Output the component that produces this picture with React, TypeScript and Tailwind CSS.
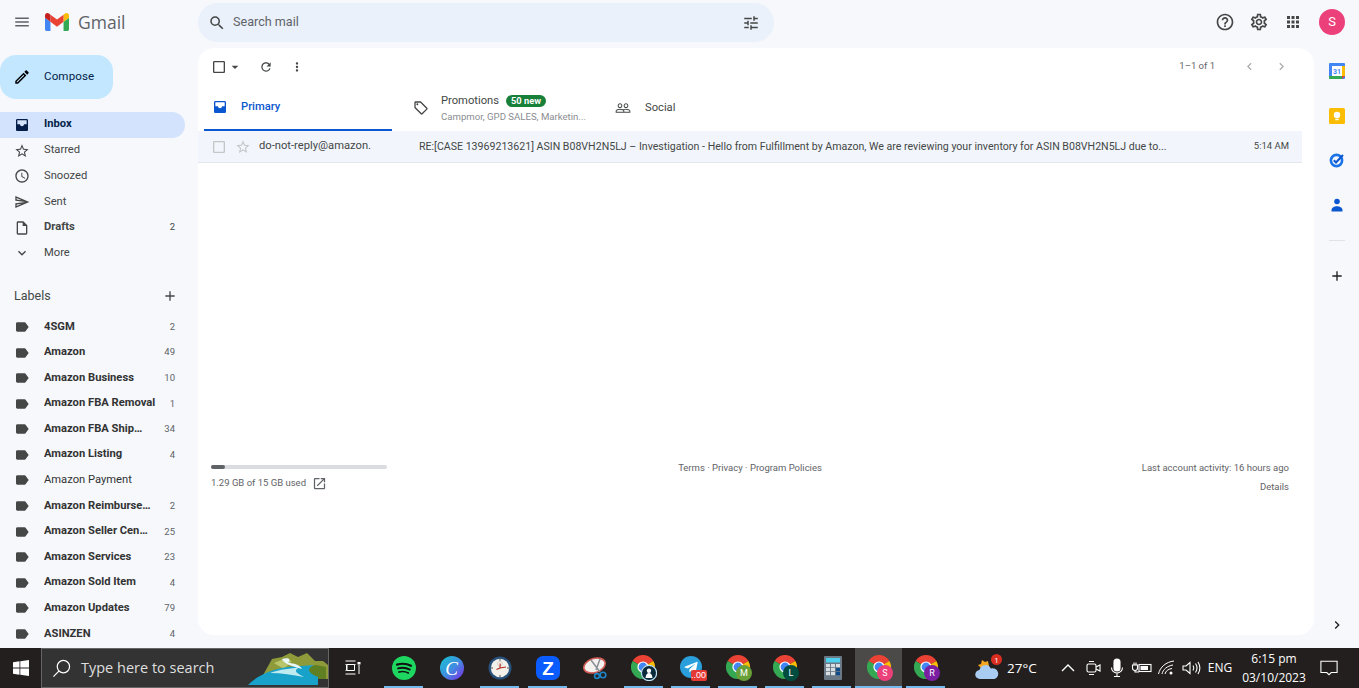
import React from 'react';

const paths = {
  menu: 'M3 18h18v-2H3v2zm0-5h18v-2H3v2zm0-7v2h18V6H3z',
  search: 'M15.5 14h-.79l-.28-.27A6.471 6.471 0 0 0 16 9.5 6.5 6.5 0 1 0 9.5 16c1.61 0 3.09-.59 4.23-1.57l.27.28v.79l5 4.99L20.49 19l-4.99-5zm-6 0C7.01 14 5 11.99 5 9.5S7.01 5 9.5 5 14 7.01 14 9.5 11.99 14 9.5 14z',
  tune: 'M3 17v2h6v-2H3zM3 5v2h10V5H3zm10 16v-2h8v-2h-8v-2h-2v6h2zM7 9v2H3v2h4v2h2V9H7zm14 4v-2H11v2h10zm-6-4h2V7h4V5h-4V3h-2v6z',
  help: 'M11 18h2v-2h-2v2zm1-16C6.48 2 2 6.48 2 12s4.48 10 10 10 10-4.48 10-10S17.52 2 12 2zm0 18c-4.41 0-8-3.59-8-8s3.59-8 8-8 8 3.59 8 8-3.59 8-8 8zm0-14c-2.21 0-4 1.79-4 4h2c0-1.1.9-2 2-2s2 .9 2 2c0 2-3 1.75-3 5h2c0-2.25 3-2.5 3-5 0-2.21-1.79-4-4-4z',
  gear: 'M19.43 12.98c.04-.32.07-.64.07-.98 0-.34-.03-.66-.07-.98l2.11-1.65c.19-.15.24-.42.12-.64l-2-3.46c-.09-.16-.26-.25-.44-.25-.06 0-.12.01-.17.03l-2.49 1c-.52-.4-1.08-.73-1.69-.98l-.38-2.65C14.46 2.18 14.25 2 14 2h-4c-.25 0-.46.18-.49.42l-.38 2.65c-.61.25-1.17.59-1.69.98l-2.49-1c-.06-.02-.12-.03-.18-.03-.17 0-.34.09-.43.25l-2 3.46c-.13.22-.07.49.12.64l2.11 1.65c-.04.32-.07.65-.07.98 0 .33.03.66.07.98l-2.11 1.65c-.19.15-.24.42-.12.64l2 3.46c.09.16.26.25.44.25.06 0 .12-.01.17-.03l2.49-1c.52.4 1.08.73 1.69.98l.38 2.65c.03.24.24.42.49.42h4c.25 0 .46-.18.49-.42l.38-2.65c.61-.25 1.17-.59 1.69-.98l2.49 1c.06.02.12.03.18.03.17 0 .34-.09.43-.25l2-3.46c.12-.22.07-.49-.12-.64l-2.11-1.65zm-1.98-1.71c.04.31.05.52.05.73 0 .21-.02.43-.05.73l-.14 1.13.89.7 1.08.84-.7 1.21-1.27-.51-1.04-.42-.9.68c-.43.32-.84.56-1.25.73l-1.06.43-.16 1.13-.2 1.35h-1.4l-.19-1.35-.16-1.13-1.06-.43c-.43-.18-.83-.41-1.23-.71l-.91-.7-1.06.43-1.27.51-.7-1.21 1.08-.84.89-.7-.14-1.13c-.03-.31-.05-.54-.05-.74s.02-.43.05-.73l.14-1.13-.89-.7-1.08-.84.7-1.21 1.27.51 1.04.42.9-.68c.43-.32.84-.56 1.25-.73l1.06-.43.16-1.13.2-1.35h1.39l.19 1.35.16 1.13 1.06.43c.43.18.83.41 1.23.71l.91.7 1.06-.43 1.27-.51.7 1.21-1.07.85-.89.7.14 1.13zM12 8c-2.21 0-4 1.79-4 4s1.79 4 4 4 4-1.79 4-4-1.79-4-4-4zm0 6c-1.1 0-2-.9-2-2s.9-2 2-2 2 .9 2 2-.9 2-2 2z',
  apps: 'M4 8h4V4H4v4zm6 12h4v-4h-4v4zm-6 0h4v-4H4v4zm0-6h4v-4H4v4zm6 0h4v-4h-4v4zm6-10v4h4V4h-4zm-6 4h4V4h-4v4zm6 6h4v-4h-4v4zm0 6h4v-4h-4v4z',
  edit: 'M14.06 9.02l.92.92L5.92 19H5v-.92l9.06-9.06M17.66 3c-.25 0-.51.1-.7.29l-1.83 1.83 3.75 3.75 1.83-1.83c.39-.39.39-1.02 0-1.41l-2.34-2.34c-.2-.2-.45-.29-.71-.29zm-3.6 3.19L3 17.25V21h3.75L17.81 9.94l-3.75-3.75z',
  inbox: 'M19 3H5c-1.1 0-2 .9-2 2v14c0 1.1.9 2 2 2h14c1.1 0 2-.9 2-2V5c0-1.1-.9-2-2-2zm0 8h-4c0 1.66-1.34 3-3 3s-3-1.34-3-3H5V5h14v6z',
  star: 'M22 9.24l-7.19-.62L12 2 9.19 8.63 2 9.24l5.46 4.73L5.82 21 12 17.27 18.18 21l-1.63-7.03L22 9.24zM12 15.4l-3.76 2.27 1-4.28-3.32-2.88 4.38-.38L12 6.1l1.71 4.04 4.38.38-3.32 2.88 1 4.28L12 15.4z',
  clock: 'M11.99 2C6.47 2 2 6.48 2 12s4.47 10 9.99 10C17.52 22 22 17.52 22 12S17.52 2 11.99 2zM12 20c-4.42 0-8-3.58-8-8s3.58-8 8-8 8 3.58 8 8-3.58 8-8 8zm.5-13H11v6l5.25 3.15.75-1.23-4.5-2.67z',
  send: 'M4.01 6.03l7.51 3.22-7.52-1 .01-2.22m7.5 8.72L4 17.97v-2.22l7.51-1M2.01 3L2 10l15 2-15 2 .01 7L23 12 2.01 3z',
  draft: 'M14 2H6c-1.1 0-1.99.9-1.99 2L4 20c0 1.1.89 2 1.99 2H18c1.1 0 2-.9 2-2V8l-6-6zM6 20V4h7v5h5v11H6z',
  down: 'M7.41 8.59L12 13.17l4.59-4.58L18 10l-6 6-6-6z',
  label: 'M17.63 5.84C17.27 5.33 16.67 5 16 5L5 5.01C3.9 5.01 3 5.9 3 7v10c0 1.1.9 1.99 2 1.99L16 19c.67 0 1.27-.33 1.63-.84L22 12l-4.37-6.16z',
  add: 'M19 13h-6v6h-2v-6H5v-2h6V5h2v6h6v2z',
  refresh: 'M17.65 6.35C16.2 4.9 14.21 4 12 4c-4.42 0-7.99 3.58-7.99 8s3.57 8 7.99 8c3.73 0 6.84-2.55 7.73-6h-2.08c-.82 2.33-3.04 4-5.65 4-3.31 0-6-2.69-6-6s2.69-6 6-6c1.66 0 3.14.69 4.22 1.78L13 11h7V4l-2.35 2.35z',
  more: 'M12 8c1.1 0 2-.9 2-2s-.9-2-2-2-2 .9-2 2 .9 2 2 2zm0 2c-1.1 0-2 .9-2 2s.9 2 2 2 2-.9 2-2-.9-2-2-2zm0 6c-1.1 0-2 .9-2 2s.9 2 2 2 2-.9 2-2-.9-2-2-2z',
  tag: 'M21.41 11.58l-9-9C12.05 2.22 11.55 2 11 2H4c-1.1 0-2 .9-2 2v7c0 .55.22 1.05.59 1.42l9 9c.36.36.86.58 1.41.58s1.05-.22 1.41-.59l7-7c.37-.36.59-.86.59-1.41s-.23-1.06-.59-1.42zM13 20.01L4 11V4h7v-.01l9 9-7 7.02zM6.5 5A1.5 1.5 0 1 0 6.5 8 1.5 1.5 0 1 0 6.5 5z',
  people: 'M16.5 13c-1.2 0-3.07.34-4.5 1-1.43-.67-3.3-1-4.5-1C5.33 13 1 14.08 1 16.25V19h22v-2.75c0-2.17-4.33-3.25-6.5-3.25zm-4 4.5h-10v-1.25c0-.54 2.56-1.75 5-1.75s5 1.21 5 1.75v1.25zm9 0H14v-1.25c0-.46-.2-.86-.52-1.22.88-.3 1.96-.53 3.02-.53 2.44 0 5 1.21 5 1.75v1.25zM7.5 12c1.93 0 3.5-1.57 3.5-3.5S9.43 5 7.5 5 4 6.57 4 8.5 5.57 12 7.5 12zm0-5.5c1.1 0 2 .9 2 2s-.9 2-2 2-2-.9-2-2 .9-2 2-2zm9 5.5c1.93 0 3.5-1.57 3.5-3.5S18.43 5 16.5 5 13 6.57 13 8.5s1.57 3.5 3.5 3.5zm0-5.5c1.1 0 2 .9 2 2s-.9 2-2 2-2-.9-2-2 .9-2 2-2z',
  open: 'M19 19H5V5h7V3H5a2 2 0 0 0-2 2v14a2 2 0 0 0 2 2h14c1.1 0 2-.9 2-2v-7h-2v7zM14 3v2h3.59l-9.83 9.83 1.41 1.41L19 6.41V10h2V3h-7z',
  box: 'M19 5v14H5V5h14m0-2H5c-1.1 0-2 .9-2 2v14c0 1.1.9 2 2 2h14c1.1 0 2-.9 2-2V5c0-1.1-.9-2-2-2z',
  left: 'M15.41 7.41L14 6l-6 6 6 6 1.41-1.41L10.83 12z',
  right: 'M10 6L8.59 7.41 13.17 12l-4.58 4.59L10 18l6-6z',
  caret: 'M7 10l5 5 5-5z',
};

const Icon = ({ d, className }: { d: string; className: string }) => (
  <svg viewBox="0 0 24 24" fill="currentColor" className={`shrink-0 ${className}`}>
    <path d={d} />
  </svg>
);

const nav = [
  { name: 'Inbox', icon: paths.inbox, bold: true, active: true },
  { name: 'Starred', icon: paths.star },
  { name: 'Snoozed', icon: paths.clock },
  { name: 'Sent', icon: paths.send },
  { name: 'Drafts', icon: paths.draft, bold: true, count: '2' },
  { name: 'More', icon: paths.down },
];

const labels = [
  { name: '4SGM', count: '2' },
  { name: 'Amazon', count: '49' },
  { name: 'Amazon Business', count: '10' },
  { name: 'Amazon FBA Removal', count: '1' },
  { name: 'Amazon FBA Shipment', count: '34' },
  { name: 'Amazon Listing', count: '4' },
  { name: 'Amazon Payment', light: true },
  { name: 'Amazon Reimbursement', count: '2' },
  { name: 'Amazon Seller Central', count: '25' },
  { name: 'Amazon Services', count: '23' },
  { name: 'Amazon Sold Item', count: '4' },
  { name: 'Amazon Updates', count: '79' },
  { name: 'ASINZEN', count: '4' },
];

const GmailLogo = () => (
  <svg viewBox="52 42 88 66" className="h-[18px] w-6">
    <path fill="#4285f4" d="M58 108h14V74L52 59v43c0 3.32 2.69 6 6 6" />
    <path fill="#34a853" d="M120 108h14c3.32 0 6-2.69 6-6V59l-20 15" />
    <path fill="#fbbc04" d="M120 48v26l20-15v-8c0-7.42-8.47-11.65-14.4-7.2" />
    <path fill="#ea4335" d="M72 74V48l24 18 24-18v26L96 92" />
    <path fill="#c5221f" d="M52 51v8l20 15V48l-5.6-4.2c-5.94-4.45-14.4-.22-14.4 7.2" />
  </svg>
);

const Chrome = ({ badge, color }: { badge?: string; color?: string }) => (
  <svg viewBox="0 0 26 26" className="h-[26px] w-[26px]">
    <g transform="translate(0 0)">
      <path fill="#ea4335" d="M12 12L1.6 6A12 12 0 0 1 22.4 6z" />
      <path fill="#fbbc04" d="M12 12L22.4 6A12 12 0 0 1 12 24z" />
      <path fill="#34a853" d="M12 12L12 24A12 12 0 0 1 1.6 6z" />
      <circle cx="12" cy="12" r="5.6" fill="#fff" />
      <circle cx="12" cy="12" r="4.4" fill="#4285f4" />
    </g>
    <circle cx="18" cy="18" r="8" fill={color} />
    {badge === '@' ? (
      <g>
        <circle cx="18" cy="18" r="7.6" fill="#0b2a3a" stroke="#bfe3f5" strokeWidth="1.2" />
        <circle cx="18" cy="15.8" r="2.2" fill="#fff" />
        <path fill="#fff" d="M14.5 23c.3-3.5 1.7-5 3.5-5s3.2 1.5 3.5 5z" />
      </g>
    ) : (
      <text x="18" y="21" textAnchor="middle" fontSize="9" fill="#fff" fontFamily="Roboto, sans-serif">
        {badge}
      </text>
    )}
  </svg>
);

const Spotify = () => (
  <svg viewBox="0 0 24 24" className="h-6 w-6">
    <circle cx="12" cy="12" r="12" fill="#1ed760" />
    <g fill="none" stroke="#111" strokeLinecap="round">
      <path strokeWidth="2.2" d="M5 8.6c4.6-1.3 9.8-1 14 1.2" />
      <path strokeWidth="1.9" d="M6 12.4c3.9-1 8.3-.7 11.8 1.2" />
      <path strokeWidth="1.6" d="M6.8 16c3.2-.8 6.8-.5 9.6 1" />
    </g>
  </svg>
);

const Canva = () => (
  <svg viewBox="0 0 24 24" className="h-6 w-6">
    <defs>
      <linearGradient id="canva" x1="0" y1="0" x2="1" y2="1">
        <stop offset="0" stopColor="#12c6cf" />
        <stop offset="0.5" stopColor="#3f8fe0" />
        <stop offset="1" stopColor="#7d2ae8" />
      </linearGradient>
    </defs>
    <circle cx="12" cy="12" r="12" fill="url(#canva)" />
    <text x="11.5" y="18.5" textAnchor="middle" fontSize="19" fontStyle="italic" fill="#fff" fontFamily="'Liberation Serif', serif">
      C
    </text>
  </svg>
);

const ClockApp = () => (
  <svg viewBox="0 0 24 24" className="h-6 w-6">
    <circle cx="12" cy="12" r="11.5" fill="#27507a" />
    <circle cx="12" cy="12" r="9.2" fill="#f4f1ea" />
    <circle cx="12" cy="7.8" r="2.4" fill="none" stroke="#c9b9b0" strokeWidth="0.6" />
    <path d="M12 2.8v2M21 12h-2M3 12h2M12 21v-2" stroke="#555" strokeWidth="1" />
    <path d="M12 12l6-1M12 12l-3.5 1.5M12 12l.2-4.5" stroke="#b3261e" strokeWidth="1.1" />
  </svg>
);

const ZoomApp = () => (
  <div className="flex h-6 w-6 items-center justify-center rounded-[7px] bg-[#0b5cff] font-['Liberation_Sans',sans-serif] text-[19px] leading-none font-bold text-white">
    Z
  </div>
);

const Snip = () => (
  <svg viewBox="0 0 26 26" className="h-[26px] w-[26px]">
    <ellipse cx="11.5" cy="10.5" rx="11" ry="7" fill="#f4f1ee" stroke="#d05a55" strokeWidth="1.6" transform="rotate(-18 11.5 10.5)" />
    <path d="M8 5l9 12M17 4l-4 11" stroke="#8a8f96" strokeWidth="1.5" />
    <circle cx="20" cy="20" r="2.8" fill="none" stroke="#1d86c9" strokeWidth="1.6" />
    <circle cx="14" cy="21" r="2.4" fill="none" stroke="#1d86c9" strokeWidth="1.6" />
  </svg>
);

const Telegram = () => (
  <div className="relative h-6 w-6">
    <svg viewBox="0 0 24 24" className="h-6 w-6">
      <circle cx="11" cy="11" r="11" fill="#2a9fdc" />
      <path fill="#fff" d="M4.5 10.8l12.2-4.9c.6-.2 1.1.2.9.9l-2 9.5c-.2.7-.6.8-1.2.5l-3-2.2-1.5 1.4c-.2.2-.3.3-.6.3l.2-3.1 5.6-5.1c.2-.2 0-.3-.3-.1l-7 4.4-3-.9c-.6-.2-.6-.6.7-1.1z" />
    </svg>
    <span className="absolute right-[-3px] bottom-[-1px] flex h-[11px] w-4 items-center justify-center rounded-[2px] bg-[#e53935] font-['Liberation_Sans',sans-serif] text-[9px] leading-none text-white">
      ..00
    </span>
  </div>
);

const Calc = () => (
  <svg viewBox="0 0 18 24" className="h-6 w-[18px]">
    <rect width="18" height="24" rx="1" fill="#6b7885" />
    <rect x="2" y="2" width="14" height="4.5" fill="#4fd0ee" />
    {[8, 12, 16].map((y) =>
      [2, 7, 12].map((x) => <rect key={`${x}-${y}`} x={x} y={y} width="4" height="3.2" fill={x === 12 && y > 8 ? '#0f4c8a' : '#d8dde2'} />)
    )}
  </svg>
);

const apps = [
  { node: <Spotify />, bar: true, wide: true },
  { node: <Canva />, wide: true },
  { node: <ClockApp />, bar: true, wide: true },
  { node: <ZoomApp />, bar: true, wide: true },
  { node: <Snip />, wide: true },
  { node: <Chrome badge="@" color="#0b2a3a" />, bar: true, wide: true },
  { node: <Telegram />, bar: true },
  { node: <Chrome badge="M" color="#689f38" />, bar: true },
  { node: <Chrome badge="L" color="#004d40" />, bar: true },
  { node: <Calc />, bar: true },
  { node: <Chrome badge="S" color="#ec407a" />, bar: true, active: true },
  { node: <Chrome badge="R" color="#7b1fa2" />, bar: true },
];

const Taskbar = () => (
  <div className="flex h-10 bg-[#231f1e] font-['Open_Sans',sans-serif] text-white">
    <div className="flex w-[41px] items-center justify-center">
      <svg viewBox="0 0 16 16" className="h-4 w-4" fill="#fff">
        <path d="M0 2.2L6.5 1.3v6.3H0zM7.3 1.2L16 0v7.6H7.3zM0 8.4h6.5v6.3L0 13.8zM7.3 8.4H16V16l-8.7-1.2z" />
      </svg>
    </div>
    <div className="relative flex w-[288px] items-center overflow-hidden border-x border-t border-b border-[#666] bg-[#333]">
      <svg viewBox="0 0 20 20" className="ml-[10px] h-[19px] w-[19px]" fill="none" stroke="#fff" strokeWidth="1.3">
        <circle cx="12" cy="8" r="6.5" />
        <path d="M7.5 12.5L1.5 18.5" />
      </svg>
      <span className="ml-[10px] text-[14.5px] text-[#dfdfdf]">Type here to search</span>
      <svg viewBox="0 0 80 36" className="absolute top-0 right-0 h-9 w-20">
        <path fill="#8f9a3a" d="M14 28L24 10l10-2 8-4 8 4 9-4 8 8 8 0 5 4v14z" />
        <path fill="#5f7f22" d="M48 30l10-12 10-2 10 2v12z" />
        <path fill="#b9c56a" d="M26 14l10-4 8 2-8 8z" />
        <path fill="#19a2c9" d="M0 36C10 26 24 20 40 18l26-2c-8 4-6 8 4 12v8z" />
        <path fill="#bfeaf0" d="M22 24c10-4 20-4 30-6-6 3-6 5 4 10-12-2-22-4-34-4z" />
        <path fill="#e8f7f8" d="M34 10c6-2 10 0 6 4 6 0 12 2 14 6-6-2-18-4-20-10z" />
      </svg>
    </div>
    <div className="flex w-[50px] items-center justify-center pr-[2px]">
      <svg viewBox="0 0 16 16" className="h-4 w-4" fill="none" stroke="#fff" strokeWidth="1">
        <path d="M.5 1h10M2 4.5h7.5v6H2zM.5 14h10M.5 4.5h1v6h-1M9.5 4.5h1M14 5v9" />
        <rect x="12.5" y="2" width="3" height="2.5" fill="#fff" stroke="none" />
      </svg>
    </div>
    {apps.map((app, i) => (
      <div key={i} className={`flex flex-col items-center ${app.wide ? 'w-12' : 'w-[47px]'} ${app.active ? 'bg-[#4c4a48]' : ''}`}>
        <div className="flex flex-1 items-center justify-center pt-[2px] pl-[2px]">{app.node}</div>
        <div className={`h-0.5 ${app.active ? 'w-full' : 'w-[39px]'} ${app.bar ? 'bg-[#76b9ed]' : ''}`} />
      </div>
    ))}
    <div className="ml-[26px] flex items-center">
      <div className="relative h-6 w-6">
        <svg viewBox="0 0 24 24" className="h-6 w-6">
          <path fill="#f5a623" d="M3 9l3-1 1-4 3 2 3-1 1 5-5 5z" />
          <path fill="#a9cdf2" d="M5 23a4.5 4.5 0 0 1-.5-9 6 6 0 0 1 11.3-1.5A5 5 0 0 1 19.500 23z" />
        </svg>
        <span className="absolute top-[-2px] right-[-3px] flex h-[11px] w-[11px] items-center justify-center rounded-full bg-[#d92d20] text-[8px] leading-none text-white">1</span>
      </div>
      <span className="ml-2 w-[30px] text-[13.5px] whitespace-nowrap">27°C</span>
    </div>
    <div className="ml-[19px] flex items-center text-white">
      <svg viewBox="0 0 24 24" className="h-6 w-6" fill="none" stroke="#fff" strokeWidth="1.4"><path d="M6 15l6-6 6 6" /></svg>
      <svg viewBox="0 0 24 24" className="ml-[1px] h-6 w-6" fill="none" stroke="#fff" strokeWidth="1.1">
        <rect x="6" y="8" width="9" height="8" rx="1.5" />
        <path d="M15 11l4-2v6l-4-2M8 5.500h5M8 18.500h5" />
      </svg>
      <svg viewBox="0 0 24 24" className="h-6 w-6" fill="none" stroke="#fff" strokeWidth="1.1">
        <rect x="9" y="3" width="6" height="12" rx="3" fill="#fff" />
        <path d="M6.500 11.500a5.500 5.500 0 0 0 11 0M12 17v3M9 20.500h6" />
      </svg>
      <svg viewBox="0 0 24 24" className="ml-[1px] h-6 w-6" fill="none" stroke="#fff" strokeWidth="1.1">
        <rect x="9" y="8.500" width="12" height="7" />
        <rect x="10.500" y="10" width="7.500" height="4" fill="#fff" stroke="none" />
        <path d="M2.500 9h5v3a2 2 0 0 1-5 0zM4 6.500V9M6 6.500V9M5 14v2h4" />
      </svg>
      <svg viewBox="0 0 24 24" className="ml-[1px] h-6 w-6" fill="none" stroke="#fff" strokeWidth="1">
        <path d="M3.500 18C5 11 11 6 19 5M7 18c1-4.500 5-8 11-9M10 18c.8-3 3-5 7-5.500" />
        <circle cx="16" cy="17" r="1.500" fill="#fff" stroke="none" />
      </svg>
      <svg viewBox="0 0 24 24" className="h-6 w-6" fill="none" stroke="#fff" strokeWidth="1.100">
        <path d="M4 10h3l4-3.500v11L7 14H4zM14 9.500c1 1.500 1 3.500 0 5M16.500 7.500c2 3 2 6 0 9M19 6c2.500 4 2.500 8 0 12" />
      </svg>
    </div>
    <div className="ml-[1px] flex w-8 items-center justify-center text-[12px]">ENG</div>
    <div className="ml-[6px] flex w-16 flex-col items-center justify-center text-[12px] leading-[19px] whitespace-nowrap">
      <span>6:15 pm</span>
      <span>03/10/2023</span>
    </div>
    <div className="ml-[11px] flex w-6 items-center justify-center">
      <svg viewBox="0 0 20 20" className="h-[18px] w-[18px]" fill="none" stroke="#fff" strokeWidth="1.200">
        <path d="M1 2.500h18v12.500h-6.500L10 17.500 7.500 15H1z" />
      </svg>
    </div>
  </div>
);

const Sidebar = () => (
  <aside className="w-[198px] shrink-0 overflow-hidden">
    <div className="mt-[7px] flex h-11 w-[113px] items-center rounded-r-2xl rounded-l-2xl bg-[#c2e7ff] pl-[13px] text-[#041e49]">
      <Icon d={paths.edit} className="h-[18px] w-[18px] text-black" />
      <span className="ml-[13px] text-[11.6px] tracking-[0.1px]">Compose</span>
    </div>
    <div className="mt-[13px] mr-[13px]">
      {nav.map((n) => (
        <div key={n.name} className={`flex h-[25.7px] items-center rounded-r-full pr-[10px] pl-[14px] text-[11.2px] ${n.active ? 'bg-[#d3e3fd] text-[#041e49]' : 'text-[#444746]'} ${n.bold ? 'font-bold' : ''}`}>
          <Icon d={n.icon} className={`h-4 w-4 ${n.active ? 'text-[#041e49]' : 'text-[#444746]'}`} />
          <span className="ml-[14px] flex-1">{n.name}</span>
          {n.count && <span className="text-[9.5px] font-normal">{n.count}</span>}
        </div>
      ))}
    </div>
    <div className="mt-[17px] flex h-[26px] items-center pr-[20px] pl-[14px] text-[#444746]">
      <span className="flex-1 text-[12.5px]">Labels</span>
      <Icon d={paths.add} className="h-4 w-4" />
    </div>
    <div className="mt-[5px] mr-[13px]">
      {labels.map((l) => (
        <div key={l.name} className={`flex h-[25.6px] items-center pr-[10px] pl-[14px] text-[11.2px] text-[#333] ${l.light ? 'text-[#5f6368]' : 'font-bold'}`}>
          <Icon d={paths.label} className="h-4 w-4 text-[#444746]" />
          <span className="ml-[14px] min-w-0 flex-1 truncate">{l.name}</span>
          {l.count && <span className="ml-[14px] text-[9.5px] font-normal text-[#5f6368]">{l.count}</span>}
        </div>
      ))}
    </div>
  </aside>
);

const Mail = () => (
  <main className="flex h-[587px] w-[1116px] shrink-0 flex-col overflow-hidden rounded-2xl bg-white">
    <div className="flex h-[37px] shrink-0 items-center pr-[25px] pl-[13px] text-[#444746]">
      <Icon d={paths.box} className="h-4 w-4" />
      <Icon d={paths.caret} className="ml-[0px] h-4 w-4" />
      <Icon d={paths.refresh} className="ml-[16px] h-[14px] w-[14px]" />
      <Icon d={paths.more} className="ml-[17px] h-[14px] w-[14px]" />
      <span className="ml-auto text-[9.5px] text-[#5f6368]">1–1 of 1</span>
      <Icon d={paths.left} className="ml-[27px] h-[15px] w-[15px] text-[#aaa]" />
      <Icon d={paths.right} className="ml-[17px] h-[15px] w-[15px] text-[#aaa]" />
    </div>
    <div className="ml-[6px] flex h-[46px] shrink-0">
      <div className="flex w-[188px] items-center border-b-2 border-[#0b57d0] pl-[8px] text-[#0b57d0]">
        <Icon d={paths.inbox} className="h-4 w-4" />
        <span className="ml-[13px] text-[11.2px] font-medium">Primary</span>
      </div>
      <div className="flex w-[202px] items-center pl-[21px]">
        <Icon d={paths.tag} className="h-4 w-4 text-[#444746]" />
        <div className="ml-[12px] flex flex-col">
          <div className="flex items-center">
            <span className="text-[11.2px] text-[#444746]">Promotions</span>
            <span className="ml-[7px] rounded-full bg-[#188038] px-[5px] text-[9.3px] leading-[12px] font-bold text-white">50 new</span>
          </div>
          <span className="text-[9.6px] leading-[13px] text-[#8a8d91]">Campmor, GPD SALES, Marketin...</span>
        </div>
      </div>
      <div className="flex items-center pl-[21px] text-[#444746]">
        <Icon d={paths.people} className="h-4 w-4" />
        <span className="ml-[14px] text-[11.2px]">Social</span>
      </div>
    </div>
    <div className="mr-[12px] flex h-8 shrink-0 items-center border-b border-[#e3e8ef] bg-[#f2f6fc] pr-[13px] pl-[13px] text-[10.6px] text-[#444746]">
      <Icon d={paths.box} className="h-4 w-4 text-[#c4c7c5]" />
      <Icon d={paths.star} className="ml-[8px] h-4 w-4 text-[#c4c7c5]" />
      <span className="ml-[8px] w-[160px] text-[11.2px]">do-not-reply@amazon.</span>
      <span className="flex-1 whitespace-nowrap">
        RE:[CASE 13969213621] ASIN B08VH2N5LJ – Investigation - Hello from Fulfillment by Amazon, We are reviewing your inventory for ASIN B08VH2N5LJ due to...
      </span>
      <span className="text-[9.5px]">5:14 AM</span>
    </div>
    <div className="mt-[302px] flex justify-between pr-[25px] pl-[13px] text-[9.5px] text-[#5f6368]">
      <div className="w-[176px]">
        <div className="h-1 rounded-full bg-[#dadce0]">
          <div className="h-1 w-[14px] rounded-full bg-[#5f6368]" />
        </div>
        <div className="mt-[7px] flex items-center">
          <span>1.29 GB of 15 GB used</span>
          <Icon d={paths.open} className="ml-[6px] h-[15px] w-[15px]" />
        </div>
      </div>
      <div className="-mt-[4px]">Terms · Privacy · Program Policies</div>
      <div className="-mt-[4px] flex w-[176px] flex-col items-end">
        <span className="whitespace-nowrap">Last account activity: 16 hours ago</span>
        <span className="mt-[5px]">Details</span>
      </div>
    </div>
  </main>
);

const Rail = () => (
  <div className="flex w-[45px] shrink-0 flex-col items-center pt-[1px]">
    <div className="flex h-[44.5px] items-center">
      <svg viewBox="0 0 16 16" className="h-4 w-4">
        <rect width="16" height="16" rx="1" fill="#4285f4" />
        <rect x="3" y="3" width="10" height="10" fill="#fff" />
        <path fill="#fbbc04" d="M13 3h3v10h-3z" />
        <path fill="#34a853" d="M0 13h13v3H1a1 1 0 0 1-1-1z" />
        <path fill="#ea4335" d="M13 13h3l-3 3z" />
        <text x="8" y="11" textAnchor="middle" fontSize="7" fontWeight="700" fill="#4285f4" fontFamily="Roboto, sans-serif">31</text>
      </svg>
    </div>
    <div className="flex h-[44.5px] items-center">
      <svg viewBox="0 0 16 16" className="h-4 w-4">
        <rect width="16" height="16" rx="1.500" fill="#fbbc04" />
        <circle cx="8" cy="7" r="3.200" fill="#fff" />
        <rect x="6.300" y="10.800" width="3.400" height="1.400" fill="#fff" />
      </svg>
    </div>
    <div className="flex h-[44.5px] items-center">
      <svg viewBox="0 0 16 16" className="h-4 w-4" fill="none">
        <circle cx="7.500" cy="8.500" r="5.600" stroke="#1a73e8" strokeWidth="2.600" />
        <path d="M4.800 8.300l2.200 2.200L14 3" stroke="#0b57d0" strokeWidth="2" />
      </svg>
    </div>
    <div className="flex h-[44.5px] items-center">
      <svg viewBox="0 0 16 16" className="h-4 w-4">
        <circle cx="8" cy="4.500" r="2.800" fill="#0b57d0" />
        <path fill="#0b57d0" d="M2.500 14.500v-1.500c0-2.500 3-3.800 5.500-3.800s5.500 1.300 5.500 3.800v1.500z" />
      </svg>
    </div>
    <div className="mt-[13px] h-px w-4 bg-[#dfe3e8]" />
    <Icon d={paths.add} className="mt-[27px] h-4 w-4 text-[#1f1f1f]" />
    <Icon d={paths.right} className="mt-[333px] h-4 w-4 text-[#1f1f1f]" />
  </div>
);

export default function App() {
  return (
    <div className="flex h-[688px] w-[1359px] flex-col overflow-hidden bg-[#f6f8fc] font-[Roboto,sans-serif]">
      <header className="flex h-12 shrink-0 items-start">
        <div className="flex h-11 w-[198px] shrink-0 items-center pl-[13px]">
          <Icon d={paths.menu} className="h-[18px] w-[18px] text-[#5f6368]" />
          <div className="ml-[14px]"><GmailLogo /></div>
          <span className="ml-[9px] font-['Open_Sans',sans-serif] text-[17.5px] text-[#5f6368]">Gmail</span>
        </div>
        <div className="mt-[3px] flex h-[39px] w-[576px] items-center rounded-full bg-[#eaf1fb] pr-[14px] pl-[10px] text-[#444746]">
          <Icon d={paths.search} className="h-[18px] w-[18px]" />
          <span className="ml-[7px] flex-1 text-[12.6px] text-[#5f6368]">Search mail</span>
          <Icon d={paths.tune} className="h-[18px] w-[18px]" />
        </div>
        <div className="mt-[9px] ml-auto flex items-center pr-[14px] text-[#444746]">
          <Icon d={paths.help} className="h-5 w-5" />
          <Icon d={paths.gear} className="ml-[14px] h-5 w-5" />
          <Icon d={paths.apps} className="ml-[15px] h-[18px] w-[18px]" />
          <div className="ml-[17px] flex h-[26px] w-[26px] items-center justify-center rounded-full bg-[#ec407a] text-[13px] text-white">S</div>
        </div>
      </header>
      <div className="flex h-[600px] shrink-0">
        <Sidebar />
        <Mail />
        <Rail />
      </div>
      <Taskbar />
    </div>
  );
}
